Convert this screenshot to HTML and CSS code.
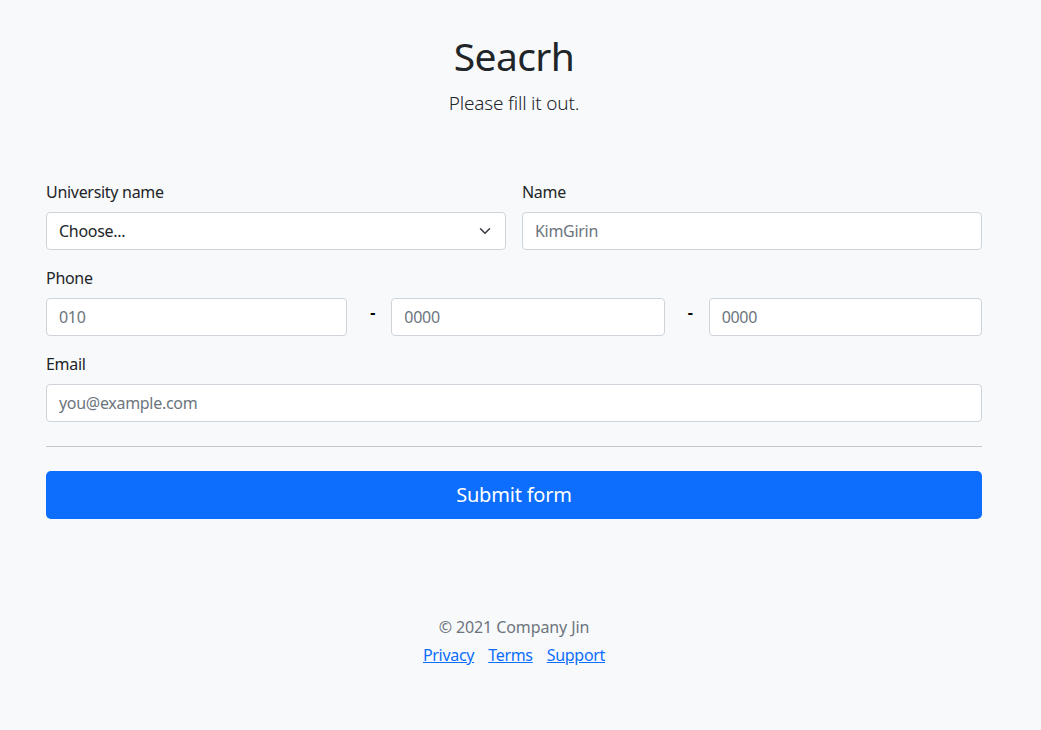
FILE: index.html
```html
<!DOCTYPE html>
<html lang="en">
<head>
<meta charset="utf-8">
<title>Search</title>
<link rel="stylesheet" href="styles.css">
</head>
<body>
<div class="page">
  <main class="container">
    <header class="header">
      <h1 class="title">Seacrh</h1>
      <p class="lead">Please fill it out.</p>
    </header>
    <form class="form">
      <div class="grid">
        <div class="field half">
          <label class="label" for="univ">University name</label>
          <div class="select">
            <span class="select-text">Choose...</span>
            <svg class="chev" width="16" height="16" viewBox="0 0 16 16"><path d="m2 5 6 6 6-6" fill="none" stroke="#343a40" stroke-width="2" stroke-linecap="round" stroke-linejoin="round"/></svg>
          </div>
        </div>
        <div class="field half">
          <label class="label" for="name">Name</label>
          <input class="input" id="name" type="text" placeholder="KimGirin">
        </div>
        <div class="field full">
          <label class="label" for="p1">Phone</label>
          <div class="phone">
            <div class="pcol"><input class="input" id="p1" type="text" placeholder="010"></div>
            <div class="pcol"><span class="dash">-</span><input class="input" type="text" placeholder="0000"></div>
            <div class="pcol"><span class="dash">-</span><input class="input" type="text" placeholder="0000"></div>
          </div>
        </div>
        <div class="field full">
          <label class="label" for="email">Email</label>
          <input class="input" id="email" type="email" placeholder="you@example.com">
        </div>
      </div>
      <hr class="rule">
      <button class="btn" type="button">Submit form</button>
    </form>
  </main>
  <footer class="footer">
    <p class="copy">© 2021 Company Jin</p>
    <ul class="links">
      <li><a href="#">Privacy</a></li>
      <li><a href="#">Terms</a></li>
      <li><a href="#">Support</a></li>
    </ul>
  </footer>
</div>
</body>
</html>
```
FILE: styles.css
```css
* { box-sizing: border-box; }
html, body { margin: 0; padding: 0; }
body {
  background: #f8f9fa;
  color: #212529;
  font-family: "Noto Sans", "Open Sans", sans-serif;
  font-size: 16px;
  line-height: 1.5;
  letter-spacing: -0.3px;
}
.page {
  padding-right: 13px;
}
.container {
  width: 936px;
  margin: 0 auto;
}
.header {
  text-align: center;
  padding-top: 33px;
  padding-bottom: 63px;
}
.title {
  margin: 0 0 9px;
  font-size: 39px;
  font-weight: 400;
  line-height: 1.2;
  letter-spacing: -0.6px;
}
.lead {
  margin: 0;
  font-size: 19px;
  font-weight: 300;
  line-height: 1.5;
  letter-spacing: -0.2px;
}
.grid {
  display: grid;
  grid-template-columns: 1fr 1fr;
  column-gap: 16px;
  row-gap: 16px;
}
.full { grid-column: 1 / -1; }
.label {
  display: block;
  margin-bottom: 8px;
  line-height: 24px;
}
.input, .select {
  display: block;
  width: 100%;
  height: 38px;
  padding: 6px 12px;
  font: inherit;
  letter-spacing: inherit;
  line-height: 24px;
  color: #212529;
  background: #fff;
  border: 1px solid #ced4da;
  border-radius: 4px;
  outline: none;
}
.input::placeholder { color: #6c757d; opacity: 1; }
.select {
  display: flex;
  align-items: center;
  justify-content: space-between;
}
.chev { width: 16px; height: 12px; flex: none; }
.phone {
  display: grid;
  grid-template-columns: repeat(3, 1fr);
  column-gap: 16px;
}
.pcol {
  display: flex;
  align-items: flex-start;
}
.dash {
  flex: none;
  width: 28px;
  padding-left: 7px;
  line-height: 24px;
  padding-top: 2px;
  font-weight: 700;
  color: #000;
}
.rule {
  margin: 24px 0;
  border: 0;
  border-top: 1px solid #c6c7c8;
  height: 0;
}
.btn {
  display: block;
  width: 100%;
  height: 48px;
  border: 0;
  border-radius: 5px;
  background: #0d6efd;
  color: #fff;
  font: inherit;
  font-size: 20px;
  line-height: 30px;
  letter-spacing: -0.2px;
}
.footer {
  margin-top: 96px;
  text-align: center;
  color: #6c757d;
}
.copy { margin: 0 0 4px; letter-spacing: -0.1px; }
.links {
  list-style: none;
  margin: 0;
  padding: 0;
  display: flex;
  justify-content: center;
  gap: 14px;
}
.links a { color: #0d6efd; text-decoration: underline; }
```
